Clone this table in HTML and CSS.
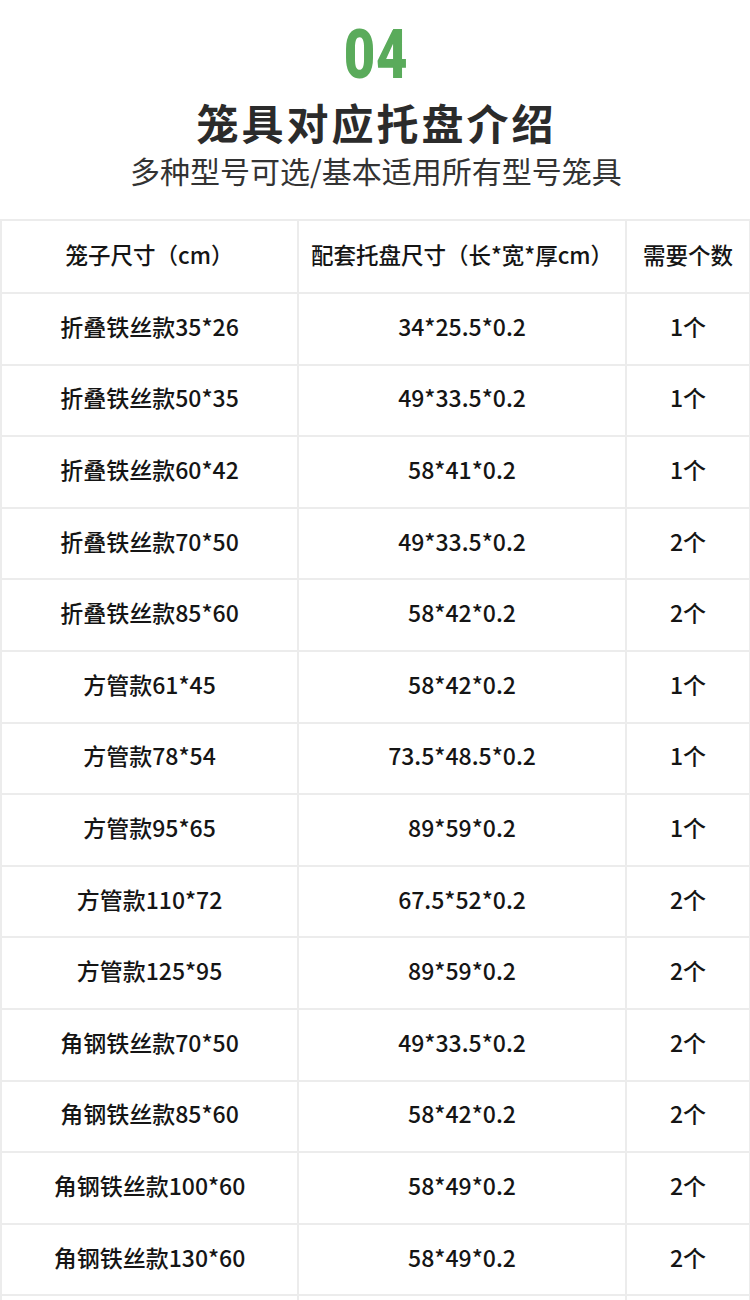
FILE: index.html
```html
<!DOCTYPE html>
<html lang="zh-CN">
<head>
<meta charset="utf-8">
<title>笼具对应托盘介绍</title>
<link rel="stylesheet" href="styles.css">
</head>
<body>
<header class="intro">
  <div class="num">04</div>
  <h1 class="title">笼具对应托盘介绍</h1>
  <p class="subtitle">多种型号可选/基本适用所有型号笼具</p>
</header>
<table class="spec">
  <colgroup><col class="c1"><col class="c2"><col class="c3"></colgroup>
  <thead>
    <tr><th>笼子尺寸（cm）</th><th>配套托盘尺寸（长*宽*厚cm）</th><th>需要个数</th></tr>
  </thead>
  <tbody>
    <tr><td>折叠铁丝款35*26</td><td>34*25.5*0.2</td><td>1个</td></tr>
    <tr><td>折叠铁丝款50*35</td><td>49*33.5*0.2</td><td>1个</td></tr>
    <tr><td>折叠铁丝款60*42</td><td>58*41*0.2</td><td>1个</td></tr>
    <tr><td>折叠铁丝款70*50</td><td>49*33.5*0.2</td><td>2个</td></tr>
    <tr><td>折叠铁丝款85*60</td><td>58*42*0.2</td><td>2个</td></tr>
    <tr><td>方管款61*45</td><td>58*42*0.2</td><td>1个</td></tr>
    <tr><td>方管款78*54</td><td>73.5*48.5*0.2</td><td>1个</td></tr>
    <tr><td>方管款95*65</td><td>89*59*0.2</td><td>1个</td></tr>
    <tr><td>方管款110*72</td><td>67.5*52*0.2</td><td>2个</td></tr>
    <tr><td>方管款125*95</td><td>89*59*0.2</td><td>2个</td></tr>
    <tr><td>角钢铁丝款70*50</td><td>49*33.5*0.2</td><td>2个</td></tr>
    <tr><td>角钢铁丝款85*60</td><td>58*42*0.2</td><td>2个</td></tr>
    <tr><td>角钢铁丝款100*60</td><td>58*49*0.2</td><td>2个</td></tr>
    <tr><td>角钢铁丝款130*60</td><td>58*49*0.2</td><td>2个</td></tr>
    <tr><td>&nbsp;</td><td>&nbsp;</td><td>&nbsp;</td></tr>
  </tbody>
</table>
</body>
</html>
```

FILE: styles.css
```css
html, body {
  margin: 0;
  padding: 0;
  background: #ffffff;
}
body {
  width: 750px;
  overflow: hidden;
  font-family: "Noto Sans CJK SC", "Noto Sans", sans-serif;
  color: #1a1a1a;
}
.intro {
  height: 219px;
  display: flex;
  flex-direction: column;
  align-items: center;
  box-sizing: border-box;
  padding-top: 18px;
}
.num {
  font-family: Roboto, "Liberation Sans", sans-serif;
  font-weight: 900;
  font-size: 68px;
  line-height: 74px;
  height: 74px;
  color: #5aab5b;
  transform: scaleX(0.8);
  letter-spacing: 1px;
  padding-left: 3px;
}
.title {
  margin: 0;
  margin-top: 2px;
  font-size: 42px;
  line-height: 56px;
  font-weight: 700;
  color: #2b2b2b;
  letter-spacing: 3px;
  padding-left: 3px;
}
.subtitle {
  margin: 0;
  font-size: 30px;
  line-height: 40px;
  color: #333333;
  letter-spacing: 0;
  padding-left: 2px;
}
.spec {
  border-collapse: collapse;
  width: 749px;
  table-layout: fixed;
}
.c1 { width: 297px; }
.c2 { width: 328px; }
.c3 { width: 124px; }
.spec th, .spec td {
  border: 2px solid #ececec;
  text-align: center;
  vertical-align: middle;
  padding: 0 0 6px;
  font-size: 23px;
  font-weight: 500;
  color: #151515;
}
.spec th {
  height: 65px;
  font-size: 22.5px;
}
.spec td {
  height: 63.6px;
}
.spec tbody tr:last-child td {
  height: 20px;
}
```
